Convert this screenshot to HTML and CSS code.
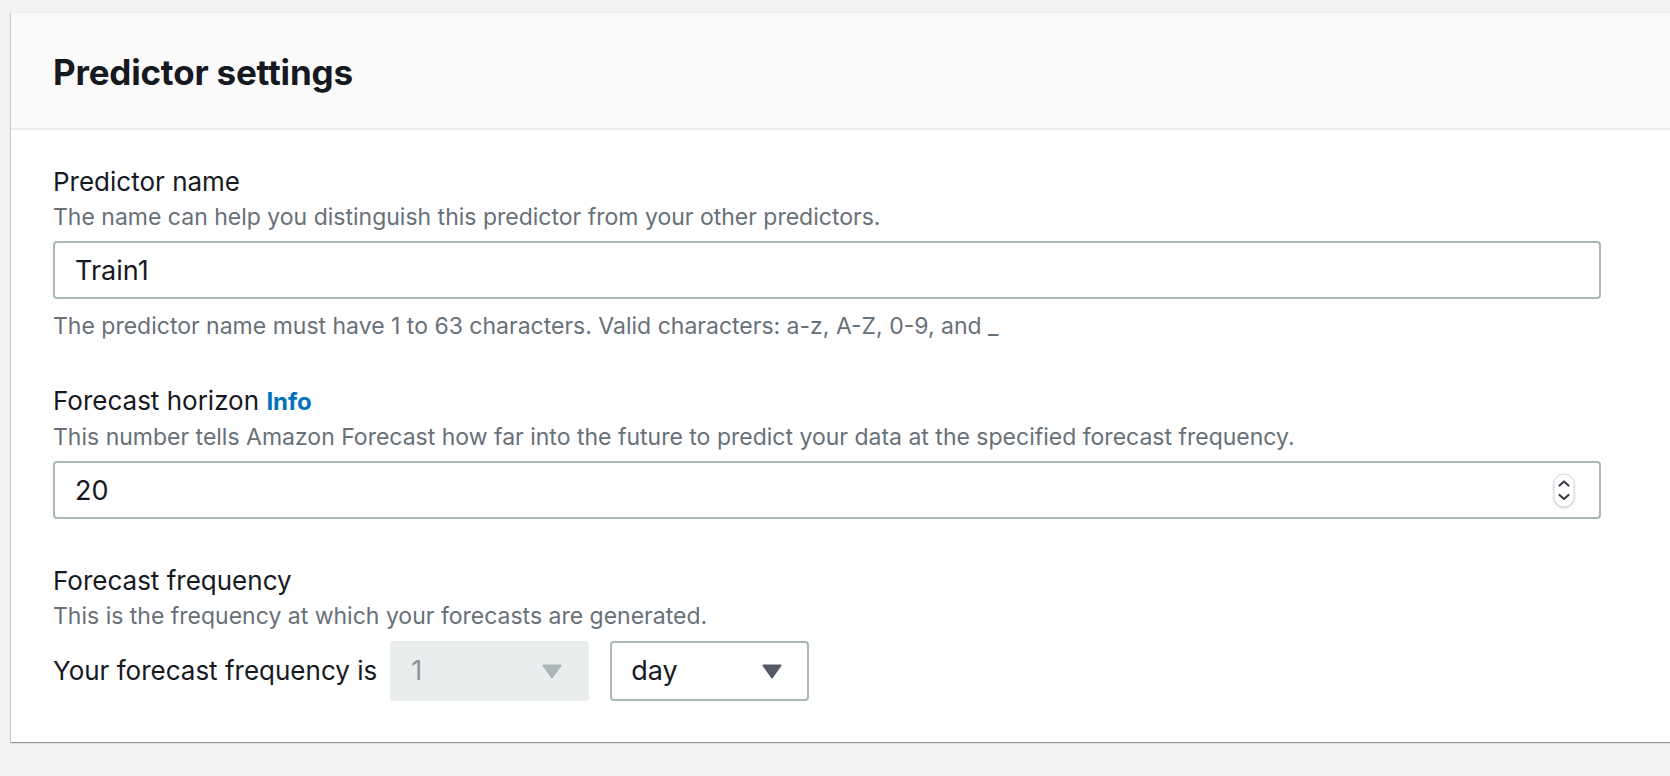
FILE: index.html
```html
<!DOCTYPE html>
<html lang="en">
<head>
<meta charset="utf-8">
<title>Predictor settings</title>
<link rel="stylesheet" href="styles.css">
</head>
<body>
<div class="page">
  <section class="card">
    <header class="card-header">
      <h2 class="card-title">Predictor settings</h2>
    </header>
    <div class="card-body">
      <div class="field">
        <div class="label">Predictor name</div>
        <div class="desc">The name can help you distinguish this predictor from your other predictors.</div>
        <div class="input"><span class="value">Train1</span></div>
        <div class="constraint">The predictor name must have 1 to 63 characters. Valid characters: a-z, A-Z, 0-9, and _</div>
      </div>
      <div class="field">
        <div class="label">Forecast horizon <a class="info" href="#">Info</a></div>
        <div class="desc">This number tells Amazon Forecast how far into the future to predict your data at the specified forecast frequency.</div>
        <div class="input number">
          <span class="value">20</span>
          <svg class="spinner" width="22" height="36" viewBox="0 0 22 36" aria-hidden="true">
            <rect x="1" y="1" width="20" height="33" rx="10" ry="10" fill="#ffffff" stroke="#d5dbdb" stroke-width="1"/>
            <path d="M6.5 12.5 L11 8.5 L15.5 12.5" fill="none" stroke="#3b4048" stroke-width="2.2" stroke-linecap="round" stroke-linejoin="round"/>
            <path d="M6.5 22 L11 26 L15.5 22" fill="none" stroke="#3b4048" stroke-width="2.2" stroke-linecap="round" stroke-linejoin="round"/>
          </svg>
        </div>
      </div>
      <div class="field">
        <div class="label">Forecast frequency</div>
        <div class="desc">This is the frequency at which your forecasts are generated.</div>
        <div class="freq-row">
          <span class="row-text">Your forecast frequency is</span>
          <div class="select disabled">
            <span class="select-value">1</span>
            <svg class="caret" width="20" height="15" viewBox="0 0 20 15" aria-hidden="true"><path d="M1.5 1.5 H18.5 L10 13.5 Z" fill="#aab7b8" stroke="#aab7b8" stroke-width="2" stroke-linejoin="round"/></svg>
          </div>
          <div class="select">
            <span class="select-value">day</span>
            <svg class="caret" width="20" height="15" viewBox="0 0 20 15" aria-hidden="true"><path d="M1.5 1.5 H18.5 L10 13.5 Z" fill="#545b64" stroke="#545b64" stroke-width="2" stroke-linejoin="round"/></svg>
          </div>
        </div>
      </div>
    </div>
  </section>
</div>
</body>
</html>
```

FILE: styles.css
```css
html, body {
  margin: 0;
  padding: 0;
  background: #f2f3f3;
  font-family: Inter, Roboto, "Liberation Sans", Arial, sans-serif;
  color: #16191f;
  overflow: hidden;
}

.page {
  padding: 12px 0 0 11px;
  height: 776px;
  box-sizing: border-box;
}

.card {
  margin-right: -60px;
  background: #ffffff;
  border-top: 1px solid #eaeded;
  box-shadow: 0 1px 1px 0 rgba(0, 28, 36, 0.3), -1px 1px 1px 0 rgba(0, 28, 36, 0.15);
}

.card-header {
  background: #fafafa;
  border-bottom: 2px solid #eaeded;
  padding: 39px 42px 36px 42px;
}

.card-title {
  margin: 0;
  font-size: 35px;
  line-height: 40px;
  font-weight: 700;
  letter-spacing: -0.2px;
  color: #16191f;
}

.card-body {
  padding: 34px 42px 41px 42px;
}

.field + .field {
  margin-top: 41px;
}

.field + .field + .field {
  margin-top: 44px;
}

.label {
  font-size: 26px;
  line-height: 36px;
  color: #16191f;
}

.info {
  font-size: 24px;
  font-weight: 700;
  color: #0073bb;
  text-decoration: none;
}

.desc,
.constraint {
  font-size: 23px;
  line-height: 32px;
  color: #687078;
}

.desc {
  margin-top: 1px;
}

.input {
  margin-top: 8px;
  max-width: 1548px;
  height: 58px;
  box-sizing: border-box;
  border: 2px solid #aab7b8;
  border-radius: 4px;
  padding: 0 24px 0 20px;
  display: flex;
  align-items: center;
  justify-content: space-between;
  font-size: 27px;
  color: #16191f;
  background: #ffffff;
}

.value {
  line-height: 36px;
  padding-top: 2px;
}

.spinner {
  display: block;
  margin-top: 2px;
  filter: drop-shadow(0 1px 1px rgba(0, 0, 0, 0.18));
}

.constraint {
  margin-top: 11px;
}

.freq-row {
  margin-top: 9px;
  display: flex;
  align-items: center;
}

.row-text {
  font-size: 26px;
  line-height: 36px;
  color: #16191f;
  margin-right: 13px;
}

.select {
  width: 199px;
  height: 60px;
  box-sizing: border-box;
  border: 2px solid #aab7b8;
  border-radius: 4px;
  display: flex;
  align-items: center;
  justify-content: space-between;
  padding: 0 25px 0 19px;
  font-size: 27px;
  color: #16191f;
  background: #ffffff;
}

.select + .select {
  margin-left: 21px;
}

.select.disabled {
  background: #eaeded;
  border-color: #eaeded;
  color: #879596;
}

.select-value {
  line-height: 36px;
}

.caret {
  display: block;
}
```
